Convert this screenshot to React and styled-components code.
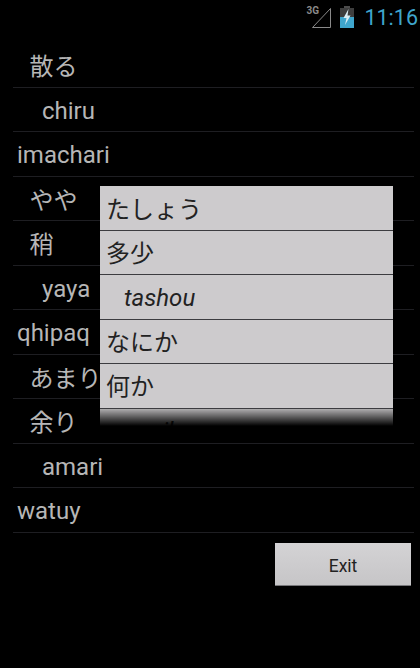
import React from 'react';
import styled, { createGlobalStyle } from 'styled-components';

const Global = createGlobalStyle`
    html, body { margin: 0; padding: 0; background: #000; }
`

const Screen = styled.div`
    width: 420px;
    height: 668px;
    position: relative;
    overflow: hidden;
    background: #000;
    font-family: "Roboto", "Noto Sans CJK JP", sans-serif;
`

const StatusBar = styled.div`
    height: 37px;
    display: flex;
    justify-content: flex-end;
    align-items: center;
    padding: 0 2px 3px 0;
    box-sizing: border-box;
`

const Clock = styled.div`
    color: #3fa6cd;
    font-size: 21.5px;
    margin-left: 10px;
`

const Signal = styled.div`
    position: relative;
    width: 26px;
    height: 24px;
    margin-right: 8px;
`

const SignalLabel = styled.span`
    position: absolute;
    left: 0;
    top: 0;
    font-size: 10px;
    font-weight: 700;
    color: #8a8a8a;
`

const List = styled.div`
    margin: 6.2px 6px 0 13px;
`

const Row = styled.div`
    height: 44.5px;
    box-sizing: border-box;
    display: flex;
    align-items: center;
    padding-left: ${props => 4 + props.level * 12.5}px;
    padding-top: ${props => props.$latin ? 3 : 0}px;
    border-bottom: 1px solid #1e1e22;
    color: #b6b6b6;
    font-size: 24px;
`

const Footer = styled.div`
    display: flex;
    justify-content: flex-end;
    padding: 10.3px 9px 0 0;
`

const ExitButton = styled.button`
    width: 136px;
    height: 43px;
    border: 0;
    border-bottom: 1px solid #77777a;
    background: linear-gradient(#d4d3d5, #c6c5c7);
    color: #222;
    font-family: inherit;
    font-size: 17.5px;
    padding: 4px 0 0;
`

const Popup = styled.div`
    position: absolute;
    left: 100px;
    top: 186px;
    width: 293px;
    height: 240px;
    overflow: hidden;
    background: #cdcbcd;
    padding-top: 0.4px;
    box-sizing: border-box;
`

const PopupRow = styled.div`
    height: 44.45px;
    flex: none;
    box-sizing: border-box;
    display: flex;
    align-items: center;
    padding-left: ${props => 6 + props.level * 9}px;
    padding-bottom: ${props => props.$italic ? 0 : 2}px;
    padding-top: ${props => props.$italic ? 2 : 0}px;
    border-bottom: 1px solid #3c3c40;
    color: #222;
    font-size: 24px;
    font-style: ${props => props.$italic ? 'italic' : 'normal'};
`

const Fade = styled.div`
    position: absolute;
    left: 0;
    right: 0;
    bottom: 0;
    height: 17px;
    background: linear-gradient(rgba(0, 0, 0, 0.15), #000);
`

const listItems = [
    ['散る', 1], ['chiru', 2, true], ['imachari', 0, true], ['やや', 1], ['稍', 1],
    ['yaya', 2, true], ['qhipaq', 0, true], ['あまり', 1], ['余り', 1], ['amari', 2, true], ['watuy', 0, true],
]

const popupItems = [
    ['たしょう', 0], ['多少', 0], ['tashou', 2, true], ['なにか', 0], ['何か', 0], ['nanika', 2, true],
]

const App = () => {
    return <Screen>
        <Global />
        <StatusBar>
            <Signal>
                <SignalLabel>3G</SignalLabel>
                <svg width="26" height="24" viewBox="0 0 26 24">
                    <path d="M6.5 22.5 L24.5 3.5 V22.5 Z" fill="none" stroke="#8a8a8a" strokeWidth="1" />
                </svg>
            </Signal>
            <svg width="14" height="22" viewBox="0 0 14 22">
                <rect x="4" y="0" width="6" height="2" fill="#4c4c4c" />
                <rect x="0" y="2" width="14" height="20" fill="#3e3e3e" />
                <rect x="0" y="11" width="14" height="11" fill="#3fa6cd" />
                <path d="M8.5 3 L3.5 12 H6.5 L5 19 L10.5 9.5 H7.5 Z" fill="#dbeef5" />
            </svg>
            <Clock>11:16</Clock>
        </StatusBar>
        <List>
            {listItems.map(([text, level, latin]) => <Row key={text} level={level} $latin={latin}>{text}</Row>)}
        </List>
        <Footer>
            <ExitButton>Exit</ExitButton>
        </Footer>
        <Popup>
            {popupItems.map(([text, level, italic]) =>
                <PopupRow key={text} level={level} $italic={italic}>{text}</PopupRow>
            )}
            <Fade />
        </Popup>
    </Screen>
}

export default App;
